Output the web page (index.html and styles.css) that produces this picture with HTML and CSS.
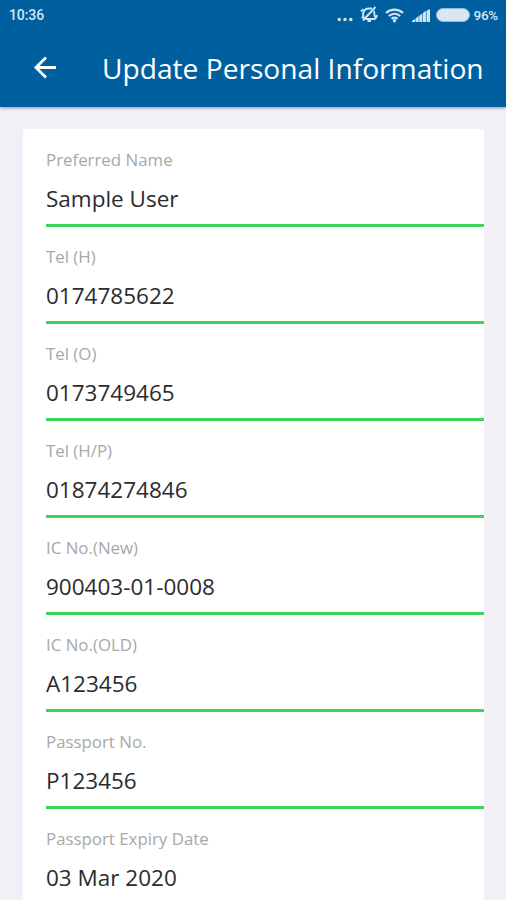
FILE: index.html
```html
<!DOCTYPE html>
<html lang="en">
<head>
<meta charset="utf-8">
<title>Update Personal Information</title>
<link rel="stylesheet" href="styles.css">
</head>
<body>
<header class="top">
  <div class="status">
    <span class="time">10:36</span>
    <svg class="dots" width="16" height="5" viewBox="0 0 16 5"><circle cx="2.200" cy="2.500" r="1.700"/><circle cx="8" cy="2.500" r="1.700"/><circle cx="13.800" cy="2.500" r="1.700"/></svg>
    <svg class="bell" width="18" height="16" viewBox="0 0 18 16"><path d="M3.500 11.500C2 7 4 2.500 9 2.500h3M5.500 13h8.500c1.500 0 2-1 1-2.500-1-1.500-.5-4-1-5.500M1.500 11.500h3M7.500 15h3.500M15.500 1L3 14.500M1 5.500l2-2.500M17 9l-1 3"/></svg>
    <svg class="wifi" width="19" height="15" viewBox="0 0 19 15"><path d="M1 5c5-4.500 12-4.500 17 0M3.800 8c3.500-3 8-3 11.400 0M6.500 10.800c2-1.600 4-1.600 6 0"/><circle cx="9.500" cy="12.700" r="1.700"/></svg>
    <svg class="signal" width="18" height="13" viewBox="0 0 18 13"><path d="M0 13v-1l3.200-2.300V13zM3.700 13V9.300l3-2.200V13zM7.300 13V6.700l3-2.200V13zM10.900 13V4l3-2.200V13z"/><path d="M14.500 13V1.800L18 0v13z"/></svg>
    <span class="battery"></span>
    <span class="percent">96%</span>
  </div>
  <div class="bar">
    <svg class="back" width="23" height="23" viewBox="0 0 24 24"><path d="M23 12H2M12.500 1.500L2 12l10.500 10.500"/></svg>
    <h1>Update Personal Information</h1>
  </div>
</header>
<main class="card">
  <div class="field"><label>Preferred Name</label><p>Sample User</p></div>
  <div class="field"><label>Tel (H)</label><p>0174785622</p></div>
  <div class="field"><label>Tel (O)</label><p>0173749465</p></div>
  <div class="field"><label>Tel (H/P)</label><p>01874274846</p></div>
  <div class="field"><label>IC No.(New)</label><p>900403-01-0008</p></div>
  <div class="field"><label>IC No.(OLD)</label><p>A123456</p></div>
  <div class="field"><label>Passport No.</label><p>P123456</p></div>
  <div class="field"><label>Passport Expiry Date</label><p>03 Mar 2020</p></div>
</main>
</body>
</html>
```
FILE: styles.css
```css
* { box-sizing: border-box; }
body { margin: 0; height: 900px; overflow: hidden; background: #f2eff7; font-family: "Open Sans", "Noto Sans", sans-serif; }
.top { height: 107px; background: #00609f; color: #fff; box-shadow: 0 1px 3px rgba(0,0,0,.4); }
.status { height: 30px; display: flex; align-items: center; padding: 0 8px 0 9px; font: 500 14px Roboto, sans-serif; color: #d3e5f1; }
.time { margin-right: auto; }
.time { letter-spacing: -0.1px; }
.percent { font-size: 13.500px; letter-spacing: -0.300px; }
.status svg { fill: currentColor; flex: none; }
.dots { margin: 8px 7px 0 0; }
.status .bell { fill: none; stroke: currentColor; stroke-width: 1.900; margin: 0 7px 2px 0; }
.wifi path { fill: none; stroke: currentColor; stroke-width: 2.200; }
.wifi { margin-right: 8px; }
.signal { margin-right: 6px; }
.battery { flex: none; width: 34px; height: 14px; border-radius: 7px; border: 1px solid #8fbad8; background: #d9e7f2; margin-right: 4px; }
.bar { height: 75px; display: flex; align-items: center; padding-left: 34px; }
.back { fill: none; stroke: #fff; stroke-width: 2.900; }
h1 { margin: 0 0 0 45px; font-size: 28.150px; font-weight: 400; white-space: nowrap; }
.card { margin: 22px 22px 0 23px; padding: 1px 0 0 23px; background: #fff; height: 771px; }
.field { height: 97px; border-bottom: 3px solid #3dd45a; padding-top: 19px; }
label { display: block; font-size: 16.850px; font-weight: 400; line-height: 22px; color: #a8a8a8; }
p { margin: 13px 0 0; font-size: 22.500px; font-weight: 400; line-height: 30px; color: #2c2c2c; }
```
